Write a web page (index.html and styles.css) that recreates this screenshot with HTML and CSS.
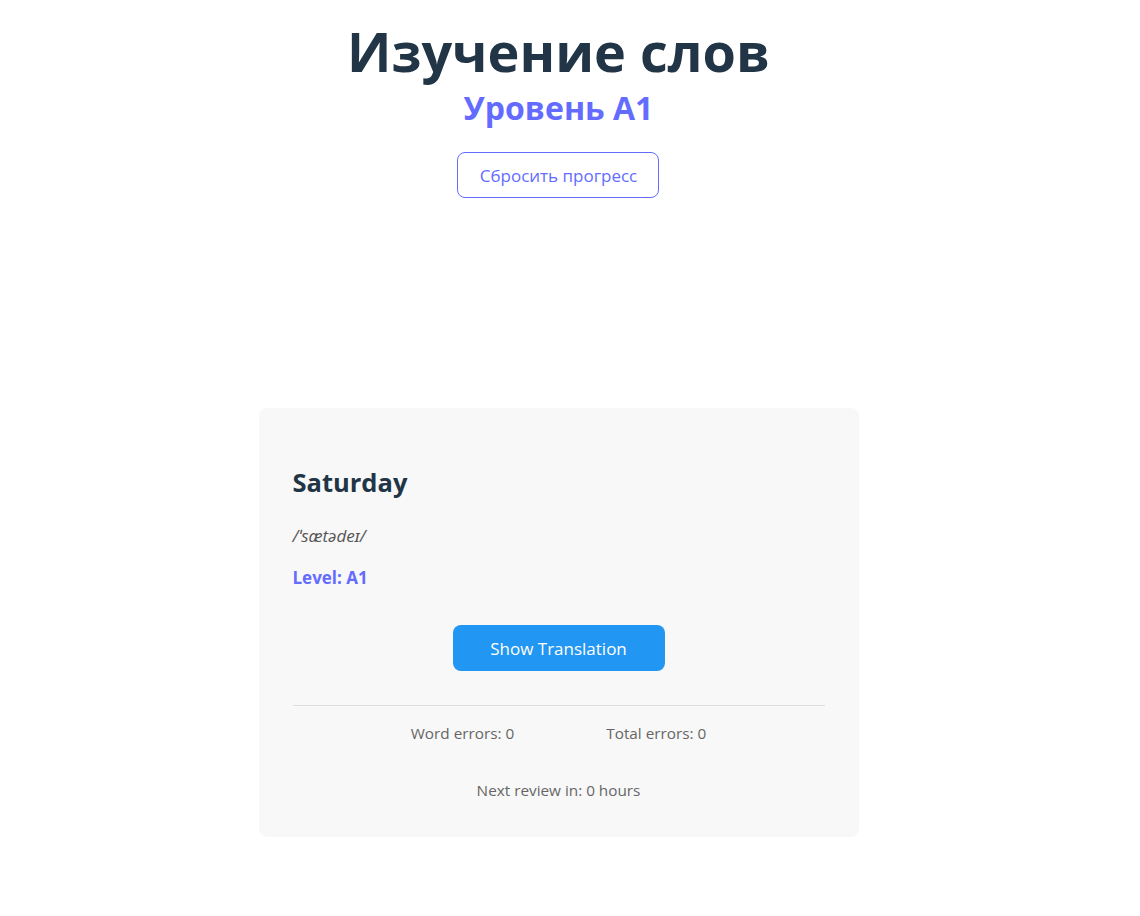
FILE: index.html
```html
<!DOCTYPE html>
<html lang="ru">
<head>
<meta charset="utf-8">
<title>Изучение слов</title>
<link rel="stylesheet" href="styles.css">
</head>
<body>
<div class="app">
  <header class="header">
    <h1 class="title">Изучение слов</h1>
    <h2 class="level-title">Уровень A1</h2>
    <button class="reset-btn">Сбросить прогресс</button>
  </header>
  <main class="card">
    <h3 class="word">Saturday</h3>
    <p class="phonetic">/ˈsætədeɪ/</p>
    <p class="level">Level: A1</p>
    <div class="actions">
      <button class="show-btn">Show Translation</button>
    </div>
    <div class="stats">
      <div class="stats-row">
        <span>Word errors: 0</span>
        <span>Total errors: 0</span>
      </div>
      <p class="next">Next review in: 0 hours</p>
    </div>
  </main>
</div>
</body>
</html>
```
FILE: styles.css
```css
* { box-sizing: border-box; }
html { font-size: 17px; }
body {
  margin: 0;
  font-family: "Open Sans", "Noto Sans", sans-serif;
  background: #fff;
  color: #213547;
}
.app {
  display: flex;
  flex-direction: column;
  align-items: center;
  padding: 19px 23px 40px 0;
}
.header {
  display: flex;
  flex-direction: column;
  align-items: center;
}
.title {
  margin: 0;
  font-size: 54px;
  font-weight: 700;
  line-height: 1.2;
  color: #213547;
}
.level-title {
  margin: 5px 0 0;
  font-size: 32px;
  font-weight: 700;
  line-height: 1.2;
  color: #646cff;
}
.reset-btn {
  margin-top: 25px;
  width: 202px;
  height: 46px;
  background: #fff;
  border: 1px solid #646cff;
  border-radius: 8px;
  color: #646cff;
  font-family: inherit;
  font-size: 17px;
}
.card {
  margin-top: 210px;
  width: 600px;
  background: #f8f8f8;
  border-radius: 8px;
  padding: 58px 34px 36px;
}
.word {
  margin: 0;
  font-size: 25.5px;
  font-weight: 700;
  line-height: 33px;
  color: #213547;
}
.phonetic {
  margin: 25px 0 0;
  font-style: italic;
  font-size: 17px;
  line-height: 23px;
  color: #555;
}
.level {
  margin: 19px 0 0;
  font-weight: 700;
  font-size: 17px;
  line-height: 23px;
  color: #646cff;
}
.actions {
  display: flex;
  justify-content: center;
  margin-top: 36px;
}
.show-btn {
  width: 212px;
  height: 46px;
  background: #2196f3;
  border: none;
  border-radius: 8px;
  color: #fff;
  font-family: inherit;
  font-size: 17px;
}
.stats {
  margin-top: 34px;
  border-top: 1px solid #ddd;
  padding-top: 17px;
  font-size: 15.3px;
  line-height: 21px;
  color: #666;
}
.stats-row {
  display: flex;
  justify-content: center;
  gap: 92px;
}
.next {
  margin: 36px 0 0;
  text-align: center;
}
```
